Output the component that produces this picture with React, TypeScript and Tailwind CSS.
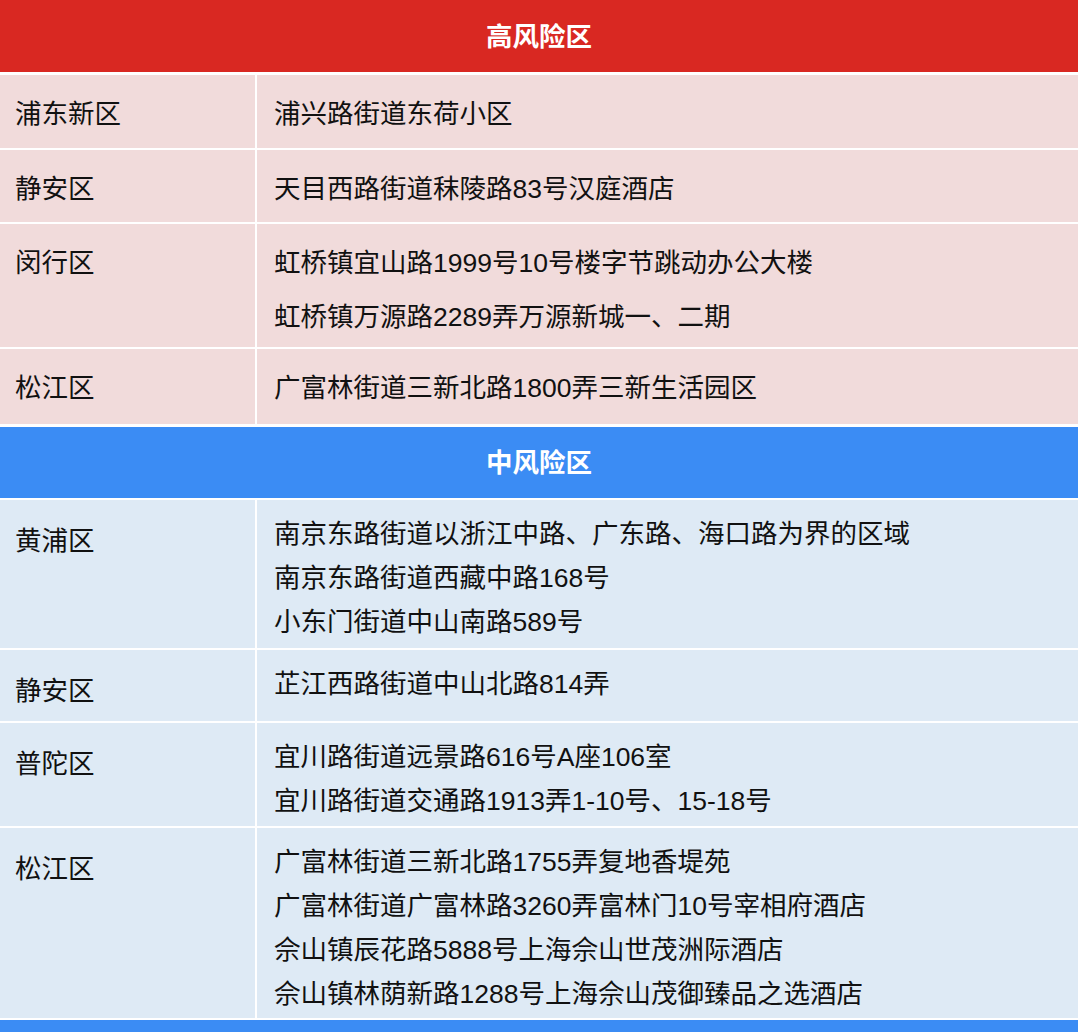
const high = [
  { district: "浦东新区", h: "h-[73px]", places: ["浦兴路街道东荷小区"] },
  { district: "静安区", h: "h-[72px]", places: ["天目西路街道秣陵路83号汉庭酒店"] },
  { district: "闵行区", h: "h-[123px]", places: ["虹桥镇宜山路1999号10号楼字节跳动办公大楼", "虹桥镇万源路2289弄万源新城一、二期"] },
  { district: "松江区", h: "h-[75px]", places: ["广富林街道三新北路1800弄三新生活园区"] },
];

const mid = [
  { district: "黄浦区", h: "h-[148px]", places: ["南京东路街道以浙江中路、广东路、海口路为界的区域", "南京东路街道西藏中路168号", "小东门街道中山南路589号"] },
  { district: "静安区", h: "h-[71px]", places: ["芷江西路街道中山北路814弄"] },
  { district: "普陀区", h: "h-[103px]", places: ["宜川路街道远景路616号A座106室", "宜川路街道交通路1913弄1-10号、15-18号"] },
  { district: "松江区", h: "h-[190px]", places: ["广富林街道三新北路1755弄复地香堤苑", "广富林街道广富林路3260弄富林门10号宰相府酒店", "佘山镇辰花路5888号上海佘山世茂洲际酒店", "佘山镇林荫新路1288号上海佘山茂御臻品之选酒店"] },
];

export default function App() {
  return (
    <div className="w-[1080px] h-[1032px] bg-white overflow-hidden font-['Liberation_Sans','Noto_Sans_CJK_SC',sans-serif] text-[26.5px] text-[#111]">
      <div className="w-[1078px] flex flex-col">
        <div className="h-[72px] pt-[3px] bg-[#d92822] text-white font-bold flex items-center justify-center">高风险区</div>
        <div className="flex flex-col gap-[2px] mt-[3px]">
          {high.map((r) => (
            <div key={r.district + r.h} className={`grid grid-cols-[255px_1fr] gap-x-[2px] ${r.h}`}>
              <div className="bg-[#f1dbdb] pl-[15px] pt-[17px] leading-[44px]">{r.district}</div>
              <div className="bg-[#f1dbdb] pl-[17px] pt-[17px] leading-[44px] flex flex-col gap-[10px]">
                {r.places.map((p) => (
                  <div key={p}>{p}</div>
                ))}
              </div>
            </div>
          ))}
        </div>
        <div className="h-[71px] mt-[3px] pt-[3px] bg-[#3b8cf4] text-white font-bold flex items-center justify-center">中风险区</div>
        <div className="flex flex-col gap-[2px] mt-[2px]">
          {mid.map((r) => (
            <div key={r.district + r.h} className={`grid grid-cols-[255px_1fr] gap-x-[2px] ${r.h}`}>
              <div className="bg-[#deeaf5] pl-[15px] pt-[19px] leading-[44px]">{r.district}</div>
              <div className="bg-[#deeaf5] pl-[17px] pt-[12px] leading-[44px] flex flex-col">
                {r.places.map((p) => (
                  <div key={p}>{p}</div>
                ))}
              </div>
            </div>
          ))}
        </div>
        <div className="h-[40px] mt-[2px] bg-[#3b8cf4]"></div>
      </div>
    </div>
  );
}
